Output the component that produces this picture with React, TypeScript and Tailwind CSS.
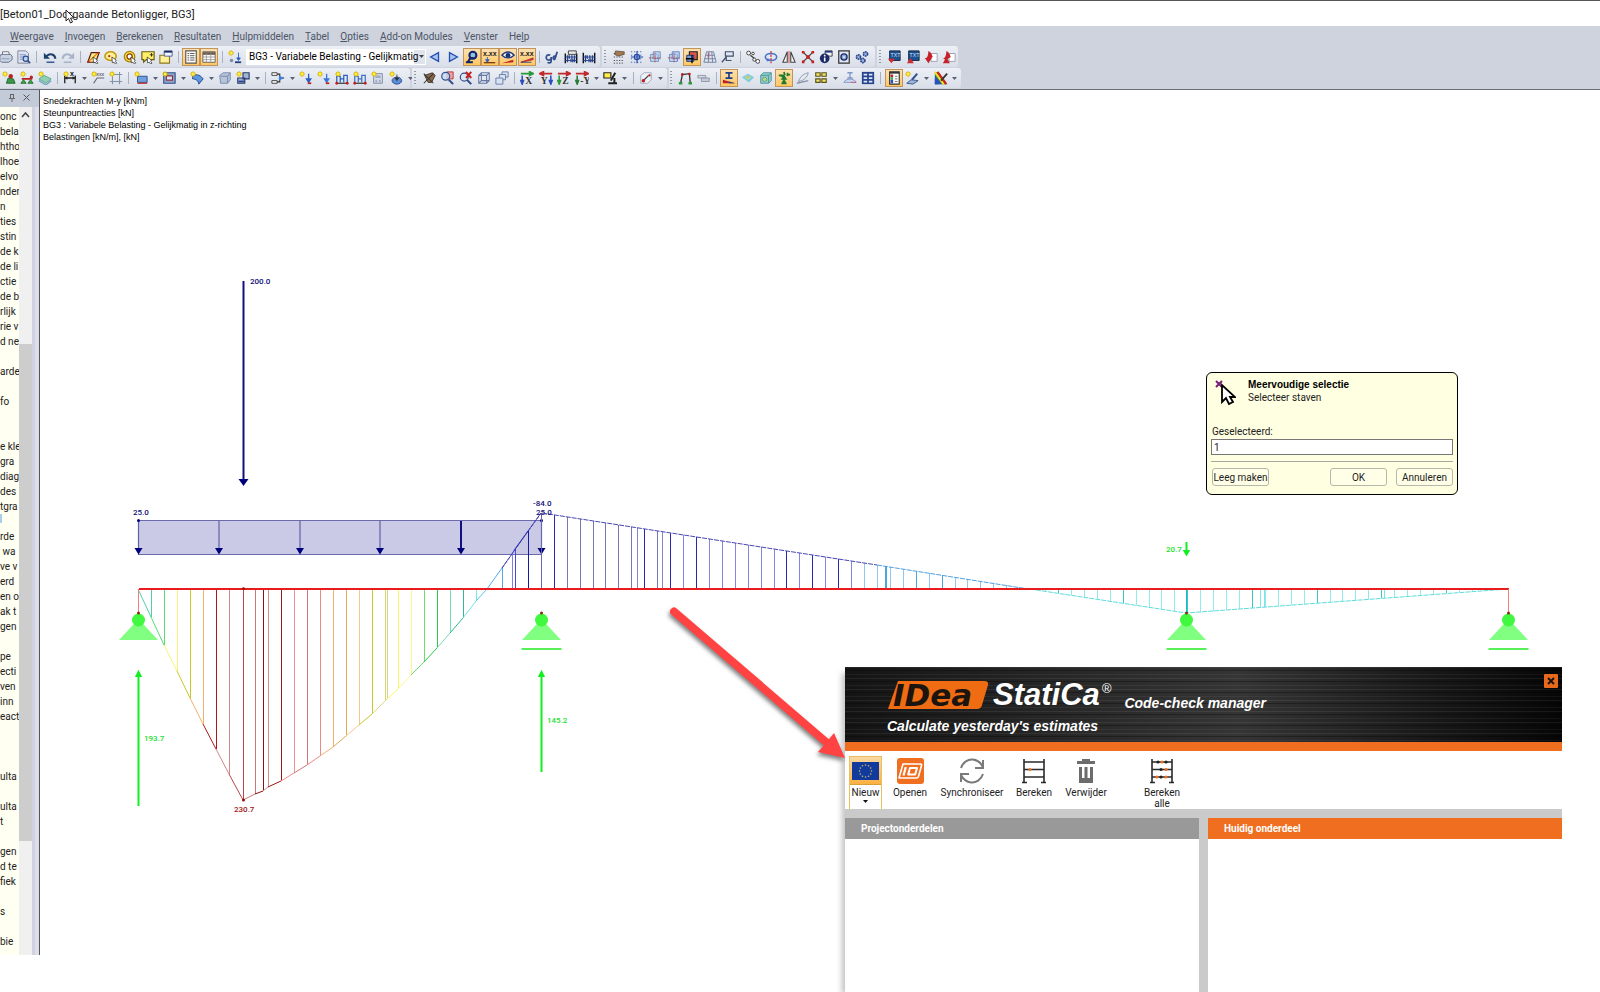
import React from "react";

/* ---------- toolbar icons (16 x 16) ---------- */

const Spark = ({ x = 3.5, y = 3.5 }: { x?: number; y?: number }) => (
  <g stroke="#d8b400" strokeWidth="1">
    <path d={`M${x - 3.5} ${y}h7M${x} ${y - 3.5}v7M${x - 2.3} ${y - 2.3}l4.6 4.6M${x + 2.3} ${y - 2.3}l-4.6 4.6`} />
    <circle cx={x} cy={y} r="1.9" fill="#fff04a" stroke="#e0c000" strokeWidth=".6" />
  </g>
);
const Hand = ({ x = 9, y = 8 }: { x?: number; y?: number }) => (
  <path d={`M${x} ${y}l5 3.5l-1 1.500l1.500 2l-1.500 1l-1.500-2l-2 .5z`} fill="#fff" stroke="#222" strokeWidth=".8" />
);
const Axis = ({ a, b, t }: { a: string; b: string; t: string }) => (
  <>
    <path d="M1 3h11M11 1l4 2l-4 2z" stroke={a} fill={a} strokeWidth="2" />
    <path d="M2.500 5v7M1 11l1.500 4l1.500-4z" stroke={b} fill={b} strokeWidth="1.800" />
    <text x="6" y="15" fontSize="11" fontFamily="Liberation Serif, serif" fontWeight="bold" fill="#333">{t}</text>
  </>
);
const Abacus = ({ y = 4 }: { y?: number }) => (
  <>
    <path d={`M1.500 ${y}v${15 - y}M14.500 ${y}v${15 - y}`} stroke="#111" strokeWidth="1.600" />
    <path d="M1 8h14M1 12h14" stroke="#223a80" />
    <path d="M4 6v4M6 6v4M9 6v4M12 6v4M4 10v4M8 10v4M10 10v4M12 10v4" stroke="#27458f" strokeWidth="1.500" />
  </>
);
const Cursor3D = ({ c }: { c: string }) => (
  <>
    <path d="M3 5h9v8H3z" fill="#c7dcf5" stroke={c} />
    <path d="M6 2h8v8H6z" fill="#aac8ee" fillOpacity=".6" stroke={c} />
    <path d="M1 9h13M8 3v12" stroke="#b04040" strokeDasharray="2 1" />
  </>
);
const Load = ({ c = "#2b5fc0" }: { c?: string }) => (
  <>
    <Spark />
    <path d="M11 3v8M8.500 9l2.500 4l2.500-4z" fill={c} stroke={c} strokeWidth="1.500" />
    <path d="M10 14h4" stroke="#c02020" strokeWidth="2" />
  </>
);
const MemberLoad = ({ c = "#2b5fc0" }: { c?: string }) => (
  <>
    <path d="M2 13V6h4v7M6 9h4v4M10 9V5h4v8" fill="none" stroke={c} strokeWidth="1.400" />
    <path d="M1 14h14" stroke="#222" strokeWidth="1.200" />
    <circle cx="2" cy="14" r="1.600" fill="#c02020" />
    <circle cx="14" cy="14" r="1.600" fill="#c02020" />
    <Spark />
  </>
);

const ICONS: Record<string, React.ReactNode> = {
  print: <><path d="M4 6V2h7l1 4" fill="#fff" stroke="#667" /><path d="M1 6l3-1h9l2 2v4l-4 3H3l-2-2z" fill="#c9d3e4" stroke="#5b6780" /><path d="M3 10h9" stroke="#8a96ad" /></>,
  preview: <><path d="M1 1h9l3 3v11H1z" fill="#dfe8f6" stroke="#778" /><path d="M3 5h7M3 7h7M3 9h4M3 11h3" stroke="#7f97c4" /><circle cx="10" cy="10" r="3" fill="#bcd5f2" stroke="#33508c" strokeWidth="1.400" /><path d="M12 12l3 3" stroke="#33508c" strokeWidth="2" /></>,
  undo: <><path d="M1 3v7h7z" fill="#1e3f6a" /><path d="M4 7c4-4 10-2 10 3" fill="none" stroke="#1e3f6a" strokeWidth="2.400" /><path d="M4 14h9" stroke="#3a5f9a" strokeWidth="1.800" /></>,
  redo: <><path d="M15 3v7H8z" fill="#a9b4c8" /><path d="M12 7c-4-4-10-2-10 3" fill="none" stroke="#a9b4c8" strokeWidth="2.400" /><path d="M3 14h9" stroke="#a9b4c8" strokeWidth="1.800" /></>,
  planeSel: <><path d="M2 14L6 3h9l-4 11z" fill="#ffe98a" stroke="#5a1c10" strokeWidth="1.400" /><path d="M3 13l10-9" stroke="#d8880f" strokeWidth="1.500" /><circle cx="3" cy="13.500" r="1.300" fill="#c02020" /><circle cx="14" cy="3.500" r="1.300" fill="#c02020" /><Hand x={8} y={8} /></>,
  ellipseSel: <><ellipse cx="7.500" cy="7" rx="6.500" ry="5" fill="#ffee9a" stroke="#c09a10" strokeWidth="1.800" /><circle cx="6" cy="7" r="1.300" fill="#c03010" /><Hand /></>,
  targetSel: <><circle cx="7.500" cy="7.500" r="6" fill="#ffe24a" stroke="#a8860b" strokeWidth="1.500" /><circle cx="7.500" cy="7.500" r="3" fill="#fff" stroke="#8a4010" strokeWidth="1.500" /><Hand /></>,
  noteSel: <><path d="M1 2h14v9H6l-3 3v-3H1z" fill="#ffee66" stroke="#6a5a10" strokeWidth="1.300" /><path d="M10 5.500h4M12 3.500v4" stroke="#222" /><Hand x={7} y={8} /></>,
  newWin: <><path d="M1 6h11v9H1z" fill="#fff099" stroke="#8a7a20" strokeWidth="1.300" /><path d="M6 1h9v6H6z" fill="#f3f6ff" stroke="#40588f" /><path d="M6 2h9" stroke="#1b2a66" strokeWidth="2" /></>,
  list: <><path d="M2 1h12v14H2z" fill="#fff" stroke="#555" strokeWidth="1.300" /><path d="M4 4h2M7 4h5M4 6.500h2M7 6.500h5M4 9h2M7 9h5M4 11.500h2M7 11.500h5" stroke="#444" /></>,
  table: <><path d="M1 2h14v12H1z" fill="#fff" stroke="#555" /><path d="M1 4h14" stroke="#6b5b4b" strokeWidth="3" /><path d="M5 4v10M10 4v10M1 8h14M1 11h14" stroke="#999" /></>,
  loadcase: <><Spark /><path d="M8 14h7" stroke="#223a80" strokeWidth="2" /><path d="M12 3v8M10 9l2 3l2-3z" stroke="#2b5fc0" fill="#2b5fc0" /><circle cx="4" cy="12" r="2" fill="#7a8dac" /></>,
  left: <path d="M12 3v10L3 8z" fill="#a8c6f4" stroke="#2350b0" strokeWidth="1.500" />,
  right: <path d="M4 3v10l9-5z" fill="#a8c6f4" stroke="#2350b0" strokeWidth="1.500" />,
  supp: <><circle cx="9" cy="6" r="4" fill="#8fc0e8" stroke="#12256a" strokeWidth="2.400" /><path d="M4 13c1-3 3-4 6-4M1 14h8M6 9L3 14" fill="none" stroke="#12256a" strokeWidth="2.200" /></>,
  x1: <><text x="0" y="6.500" fontSize="8" fontWeight="bold" fontFamily="Liberation Sans, sans-serif" fill="#222">x.xx</text><path d="M5 8v5M3 11l2 3l2-3z" stroke="#2b5fc0" fill="#2b5fc0" /><path d="M1 14.500h13" stroke="#7a3a10" strokeWidth="1.500" /></>,
  eye: <><path d="M1 6c4-5 10-5 14 0c-4 4-10 4-14 0z" fill="#fff" stroke="#223a80" strokeWidth="1.500" /><circle cx="8" cy="6" r="2.700" fill="#17306f" /><path d="M1 15l13-4v3z" fill="#c02020" /></>,
  x2: <><text x="0" y="6.500" fontSize="8" fontWeight="bold" fontFamily="Liberation Sans, sans-serif" fill="#222">x.xx</text><path d="M1 14l14-5v2z" stroke="#c03030" fill="#c03030" /><path d="M1 14h12" stroke="#1e3f8a" /></>,
  gd: <><path d="M6 6a3 3 0 1 0 1 4M7 8v5c0 2-3 2-4 1" fill="none" stroke="#33508c" strokeWidth="2" /><path d="M14 2l-3 9M13 8a2 2 0 1 0-2 3" fill="none" stroke="#33508c" strokeWidth="2" /></>,
  abacus1: <><Abacus /><path d="M5 1h9v4H5z" fill="#e9e9e9" stroke="#333" /></>,
  abacus2: <Abacus y={3} />,
  gridHand: <><path d="M2 4h12M2 8h12M2 12h12M2 15h12" stroke="#444" strokeDasharray="1.500 1.500" /><path d="M4 1l10 1v3l-7 2l-4-2z" fill="#a27a52" stroke="#4c3a2a" strokeWidth=".7" /></>,
  gridSnap: <><path d="M1 2h14M1 6h14M1 10h14M1 14h14" stroke="#3a5fb8" strokeDasharray="1.500 2" /><path d="M8 1v14M1 8h14" stroke="#2348a8" strokeWidth="1.300" /><circle cx="8" cy="8" r="3" fill="none" stroke="#2348a8" strokeWidth="1.300" /></>,
  plane1: <Cursor3D c="#6e8cb8" />,
  plane2: <Cursor3D c="#5f7fc0" />,
  planeRed: <><path d="M5 2h9v9H5z" fill="#e0574a" stroke="#222" strokeWidth="1.300" /><path d="M2 6h8v7H2z" fill="#7a9cd8" stroke="#1b2a66" /><path d="M1 10h9M8 6v9" stroke="#000" strokeWidth="1.500" /></>,
  gridPersp: <><path d="M4 2h8l3 12H1zM3 6h10M2 10h12M7 2l-1 12M10 2l1 12" fill="none" stroke="#6b7c9c" /><path d="M6 3v6" stroke="#c04040" /></>,
  section: <><path d="M5 2h9v5H5z" fill="#dfe6f2" stroke="#40506f" strokeWidth="1.300" /><path d="M1 14l5-6v4h6" fill="none" stroke="#40506f" strokeWidth="1.400" /></>,
  move: <><circle cx="3" cy="3.500" r="2.200" fill="#fff" stroke="#333" /><circle cx="8" cy="4" r="1.500" fill="#fff" stroke="#333" /><path d="M5 6l5 4" stroke="#333" strokeWidth="1.200" /><circle cx="9.500" cy="11" r="1.800" fill="#fff" stroke="#333" /><circle cx="13.500" cy="13" r="2.200" fill="#fff" stroke="#333" /></>,
  rotate: <><ellipse cx="8" cy="8" rx="6.500" ry="4" fill="none" stroke="#4a74c8" strokeWidth="1.800" /><path d="M8 1v14" stroke="#c03030" strokeWidth="1.300" strokeDasharray="3 1" /><path d="M4 9l-1 4l5-1z" fill="#4a74c8" /></>,
  mirror: <><path d="M6 2v12H1zM10 2v12h5z" fill="#f3f3f3" stroke="#444" strokeWidth="1.200" /><path d="M8 1v14" stroke="#d04040" /></>,
  scale: <><path d="M2 2l12 12M14 2L2 14" stroke="#444" strokeWidth="1.300" /><path d="M1 1h3v3H1zM12 1h3v3h-3zM1 12h3v3H1zM12 12h3v3h-3zM6 6h4v4H6z" fill="#c81e1e" /></>,
  info: <><path d="M7 1h8v6H7z" fill="#f5f5f5" stroke="#333" /><path d="M7 2h8" stroke="#223a80" strokeWidth="2" /><circle cx="6.500" cy="9.500" r="5.500" fill="#1b2a66" /><path d="M6.500 5.500v1.800M6.500 8.500v4.500" stroke="#fff" strokeWidth="1.800" /></>,
  settings: <><path d="M2 1h12v14H2z" fill="#dfe6f2" stroke="#333" strokeWidth="1.400" /><circle cx="8" cy="8" r="3.500" fill="#8fa9d8" stroke="#1b2a66" strokeWidth="1.500" /><circle cx="8" cy="8" r="1" fill="#fff" /></>,
  gears: <g fill="#9db4dc" stroke="#27458f" strokeWidth="1.800" strokeDasharray="1.800 .6"><circle cx="4" cy="8" r="2.400" /><circle cx="12" cy="4.500" r="2.400" /><circle cx="9" cy="12" r="2.400" /></g>,
  imp: <><path d="M3 1h12v11H3z" fill="#1e4f93" stroke="#123" /><text x="4" y="8.500" fontSize="6" fill="#cfe3ff" fontFamily="Liberation Sans, sans-serif">TXT</text><path d="M1 10h8l-4 5z" fill="#cf2b33" /></>,
  exp: <><path d="M3 1h12v11H3z" fill="#1e4f93" stroke="#123" /><text x="4" y="7.500" fontSize="6" fill="#cfe3ff" fontFamily="Liberation Sans, sans-serif">TXT</text><path d="M1 15h8L5 9z" fill="#cf2b33" /></>,
  pdf1: <><path d="M8 4h7v9H8z" fill="#fff" stroke="#99a" /><path d="M5 1c3 1 4 4 5 7l-5 3l-4-1c3-1 4-5 4-9z" fill="#c8202a" /><path d="M1 9h8l-4 6z" fill="#c8202a" /></>,
  pdf2: <><path d="M8 4h7v9H8z" fill="#fff" stroke="#99a" /><path d="M5 1c3 1 4 4 5 7l-5 3l-4-1c3-1 4-5 4-9z" fill="#c8202a" /><path d="M1 15h8L5 8z" fill="#c8202a" /></>,

  node: <><Spark /><path d="M5 14l2-6l6 1l2 5z" fill="#3a9a48" stroke="#1c6428" /><circle cx="10" cy="6" r="2.500" fill="#c02020" /></>,
  member: <><path d="M2 9h12" stroke="#b52020" strokeWidth="2" /><circle cx="13" cy="7" r="1.800" fill="#c02020" /><path d="M1 14l3-4l3 4zM9 14l3-4l3 4z" fill="#3fae4a" stroke="#1c6428" /><Spark /></>,
  slab: <><path d="M1 9l6-4l8 4l-6 5z" fill="#8fd0b4" stroke="#58a58a" /><path d="M1 11l8 5l6-5" fill="none" stroke="#74a3c8" strokeWidth="1.500" /><Spark /></>,
  dim: <><path d="M2 8h12M2 5v9M14 5v9" stroke="#222" strokeWidth="1.500" /><path d="M2 8l3-2v4zM14 8l-3-2v4z" fill="#222" /><text x="8" y="5.500" fontSize="8" fontWeight="bold" fontFamily="Liberation Sans, sans-serif" fill="#111">x</text><Spark /></>,
  dim2: <><Spark /><path d="M3 14l4-6h8" fill="none" stroke="#667" strokeWidth="1.300" /><text x="6" y="6" fontSize="6" fontFamily="Liberation Sans, sans-serif" fill="#333">xxx</text></>,
  frame: <><path d="M4 1v14M12 1v14M1 4h14M1 12h14" stroke="#8492ab" strokeWidth="1.200" /><Spark /></>,
  block: <><path d="M4 6h11v7H4z" fill="#6f9fdc" stroke="#27458f" /><path d="M4 14h11" stroke="#c03030" strokeWidth="1.500" /><Spark /></>,
  opening: <><path d="M2 2h13v12H2z" fill="#8fa6cc" stroke="#33508c" strokeWidth="1.300" /><path d="M5 5.500h7v5H5z" fill="#dfe6f4" stroke="#8a3040" strokeWidth="1.300" /><Spark /></>,
  curve: <><path d="M3 6c5-4 10 0 12 3l-5 6c0-4-4-6-7-6z" fill="#5d97e0" stroke="#1e3f8a" /><Spark /></>,
  solid: <><path d="M2 5l4-3h8v8l-3 4H3z" fill="#b7c5dc" stroke="#7384a4" /><path d="M3 6h8v8M11 6l3-4" fill="none" stroke="#7384a4" /></>,
  assembly: <><path d="M2 8h8v6H2zM8 2h7v7H8z" fill="#9fb4d6" stroke="#2a3c66" strokeWidth="1.300" /><path d="M3 12h7" stroke="#27458f" strokeWidth="2" /><Spark /></>,
  connect: <><path d="M1 2h6v3H1zM1 11h6v3H1z" fill="#fff" stroke="#333" /><path d="M7 3.500h3v9H7M10 8h5" fill="none" stroke="#333" strokeWidth="1.300" /><path d="M9 5l6 3l-6 3z" fill="#3d7fd8" /></>,
  load1: <Load />,
  load2: <Load c="#3a78d8" />,
  ml1: <MemberLoad />,
  ml2: <MemberLoad c="#3f6fc8" />,
  calc: <><path d="M3 3h10v11H3z" fill="#d5dbe6" stroke="#7b88a0" /><path d="M5 5h6v3H5zM5 10h2v3H5zM9 10h2v3H9z" fill="#9fadc6" /><Spark /></>,
  globe: <><ellipse cx="9" cy="11" rx="5.500" ry="4" fill="#5a8fd8" stroke="#27458f" /><path d="M9 4v5M7 8l2 3l2-3z" stroke="#333" fill="#333" /><Spark /></>,
  hand: <><path d="M3 5l9-3l3 3l-4 8H7z" fill="#8a6a4a" stroke="#3d2f22" /><path d="M2 3l11 11M2 14L13 3" stroke="#333" strokeWidth="1.200" /></>,
  zoomwin: <><path d="M8 1h7v8H8z" fill="#f2a3a3" stroke="#b03030" /><circle cx="6.500" cy="6" r="4.500" fill="#c8dcf5" fillOpacity=".8" stroke="#33508c" strokeWidth="1.400" /><path d="M10 10l5 5" stroke="#33508c" strokeWidth="2.400" /></>,
  zoomx: <><circle cx="6" cy="7" r="4.500" fill="#dbe8f8" stroke="#33508c" strokeWidth="1.400" /><path d="M9 10l5 5" stroke="#33508c" strokeWidth="2.400" /><path d="M8 1l6 7M14 1L8 8" stroke="#c81e1e" strokeWidth="2.200" /></>,
  cube: <path d="M2 5l3-3h9v9l-3 3H2zM2 5h9v9M11 5l3-3M5 2v9h9M5 11l-3 3" fill="none" stroke="#6377a3" strokeWidth="1.200" />,
  copies: <g fill="#d9e2f2" stroke="#6377a3"><path d="M8 1h7v6H8z" /><path d="M5 4h7v6H5z" /><path d="M1 8h8v7H1z" /></g>,
  ax: <Axis a="#2a9a3a" b="#2b4fc0" t="X" />,
  ay: <><path d="M4 3h11M5 1L1 3l4 2z" stroke="#c02a2a" fill="#c02a2a" strokeWidth="2" /><path d="M13.500 5v7M12 11l1.500 4l1.500-4z" stroke="#2b4fc0" fill="#2b4fc0" strokeWidth="1.800" /><text x="2" y="15" fontSize="11" fontFamily="Liberation Serif, serif" fontWeight="bold" fill="#333">Y</text></>,
  az: <Axis a="#c02a2a" b="#2a9a3a" t="Z" />,
  amy: <Axis a="#c02a2a" b="#2a7a3a" t="-Y" />,
  micro: <><path d="M1 2h8v6H1z" fill="#fff04a" stroke="#222" strokeWidth="1.300" /><path d="M14 2l-5 9M6 14h10M13 8v5" stroke="#222" strokeWidth="2.300" /></>,
  iso: <><path d="M2 5l4-3h8v8l-4 4H2z" fill="#eef1f6" stroke="#9aa6bc" /><path d="M4 12l7-7" stroke="#444" strokeWidth="1.500" /><circle cx="5" cy="11" r="2" fill="#c02020" /><circle cx="12" cy="5" r="1.300" fill="#c02020" /></>,
  portal: <><path d="M3 14l2-10l8-1l1 11" fill="none" stroke="#333" strokeWidth="1.500" /><circle cx="5" cy="4" r="1.600" fill="#c02020" /><circle cx="13" cy="3.500" r="1.600" fill="#c02020" /><path d="M1 14h4M12 14h4" stroke="#2a9a3a" strokeWidth="2.600" /></>,
  cyl: <><path d="M1 5h9v3H1z" fill="#d4d9e2" stroke="#8a94a8" /><path d="M5 8h9v4H5z" fill="#c4cad6" stroke="#8a94a8" /></>,
  stress: <><path d="M4 2h8M8 2v6M4 8h8" stroke="#1e3f8a" strokeWidth="2" /><path d="M1 14h14L1 10z" fill="#c02020" /><path d="M8 12l7 2H8z" fill="#1e3f8a" /></>,
  surface: <><path d="M1 7l7-4l7 4l-6 6z" fill="#7fcbe0" /><path d="M4 7l4-2l4 2l-4 3z" fill="#b4e48a" /><path d="M6 7l2-1l2 1l-2 1z" fill="#f0a06a" /></>,
  ccube: <><path d="M2 5l3-3h9v9l-3 3H2z" fill="#8fd0c8" stroke="#4a8f98" /><path d="M2 5h9v9M11 5l3-3" fill="none" stroke="#4a8f98" /><circle cx="6.500" cy="9.500" r="2.500" fill="#b8dc70" stroke="#6a9a9a" /></>,
  greens: <path d="M8 14V8M6 9l2-3l2 3zM2 5h5v3M12 4h3M12 2v4M8 1l1 4M5 14h6M6 12h4" stroke="#1f7a2c" fill="#2fa33e" strokeWidth="2" />,
  feather: <><path d="M3 12c2-7 7-9 11-10c-1 5-5 9-11 10z" fill="#e5eaf2" stroke="#8a94a8" /><path d="M1 14l13-3" stroke="#8a94a8" strokeWidth="1.500" /></>,
  blocks: <g fill="#f0e56a" stroke="#5a5018" strokeWidth="1.300"><path d="M2 2h5v4H2zM9 2h5v4H9zM2 9h5v4H2zM9 9h5v4H9z" /></g>,
  arc: <><path d="M5 2h6M8 2v6M5 8h6" stroke="#8095c8" strokeWidth="1.500" /><path d="M1 13c2-5 12-5 14 0z" fill="#cdd8f0" stroke="#8095c8" /><path d="M9 13h6" stroke="#d05a6a" /></>,
  bgrid: <><path d="M1 1h14v14H1z" fill="#27458f" /><path d="M3 3h4v2H3zM9 3h4v2H9zM3 7h4v2H3zM9 7h4v2H9zM3 11h4v2H3zM9 11h4v2H9z" fill="#dfe8fa" /></>,
  panel: <><path d="M3 1h11v14H3z" fill="#fff" stroke="#333" strokeWidth="1.300" /><path d="M3 2h11" stroke="#333" strokeWidth="2" /><path d="M4 4h3v3H4z" fill="#c02020" /><path d="M4 7h3v3H4z" fill="#3fae4a" /><path d="M4 10h3v4H4z" fill="#2b4fc0" /><path d="M9 6h3M9 9h3M9 12h3" stroke="#666" /></>,
  wand: <><path d="M8 10l6-7" stroke="#33508c" strokeWidth="2.200" /><path d="M2 14l5-4l8 1l-6 4z" fill="#9fb4d6" stroke="#33508c" /><Spark /></>,
  rainbow: <><path d="M1 1h4l10 14H1z" fill="#2a9a3a" /><path d="M1 5l8 10H1z" fill="#2b4fc0" /><path d="M1 9l4 6H1z" fill="#2b4fc0" /><path d="M1 1l10 14" stroke="#f0e020" strokeWidth="2.500" /><path d="M4 1l10 14" stroke="#d02020" strokeWidth="2.500" /><path d="M15 3L8 11" stroke="#333" strokeWidth="2" /></>,
};

/* "|" is a divider, "v" a menu caret, "*" in front of a name marks a pressed tool */
const Tools = ({ items }: { items: string }) => (
  <>
    {items.split(" ").map((it, i) => {
      if (it === "|") return <span key={i} className="mx-[3px] h-3 w-px shrink-0 bg-[#a9b0bf]" />;
      if (it === "v")
        return (
          <button key={i} type="button" aria-label="Meer" className="flex h-[18px] w-[10px] shrink-0 items-center justify-center">
            <svg width="5" height="3" viewBox="0 0 5 3"><path d="M0 0h5L2.500 3z" fill="#5a6070" /></svg>
          </button>
        );
      const on = it.startsWith("*");
      const name = on ? it.slice(1) : it;
      return (
        <button
          key={i}
          type="button"
          aria-label={name}
          className={
            on
              ? "flex size-[18px] shrink-0 items-center justify-center border border-[#c2935a] bg-linear-to-b from-[#fde0b0] to-[#ffc860]"
              : "flex size-[18px] shrink-0 items-center justify-center"
          }
        >
          <svg width="14" height="14" viewBox="0 0 16 16" fill="none" className="shrink-0">{ICONS[name]}</svg>
        </button>
      );
    })}
  </>
);

const Grip = () => (
  <span className="mr-1 h-[14px] w-[2px] shrink-0 bg-[repeating-linear-gradient(#9299a8_0_1px,transparent_1px_3px)]" />
);

const band = "flex items-center justify-between rounded-r-[3px] bg-linear-to-b from-[#edf0f6] to-[#d9dee8]";

const MENU: [string, string][] = [
  ["W", "eergave"], ["I", "nvoegen"], ["B", "erekenen"], ["R", "esultaten"], ["H", "ulpmiddelen"],
  ["T", "abel"], ["O", "pties"], ["A", "dd-on Modules"], ["V", "enster"],
];

const TREE = [
  "onc", "bela", "htho", "lhoe", "elvo", "nder", "n", "ties", "stin", "de k", "de li", "ctie", "de b", "rlijk", "rie v", "d ne",
  "", "arde", "", "fo", "", "", "e kle", "gra", "diag", "des", "tgra", "", "rde", " wa", "ve v", "erd", "en o", "ak t", "gen",
  "", "pe", "ecti", "ven", "inn", "eact", "", "", "", "ulta", "", "ulta", "t", "", "gen", "d te", "fiek", "", "s", "", "bie",
];

/* ---------- moment diagram ---------- */

type Ord = [number, number, string];
const FIELD: Ord[] = [
  [138, 589, "#5ee0e0"], [151, 617, "#4fd0a8"], [164, 645, "#58dc78"], [177, 671, "#f4f47a"], [190, 698, "#c8c828"],
  [203, 724, "#f0b070"], [216, 749, "#b01818"], [229, 774, "#d08888"], [243, 800, "#b84848"], [255, 794, "#c87878"],
  [263, 791, "#8c1010"], [268, 787, "#d09090"], [281, 781, "#981818"], [294, 773, "#f09090"], [307, 765, "#d07878"],
  [320, 756, "#f08888"], [333, 747, "#f0b070"], [346, 736, "#e0a858"], [359, 725, "#f4c890"], [372, 714, "#c8c828"],
  [385, 701, "#d8d880"], [387, 699, "#d8d880"], [398, 689, "#f8f860"], [411, 675, "#f8f890"], [424, 662, "#70dc70"],
  [437, 648, "#30c848"], [450, 633, "#78dcb0"], [463, 618, "#30b890"], [476, 601, "#70e8e8"], [487, 589, "#50c8e8"],
  [502, 568, "#58a8f0"], [512, 554, "#8080e0"], [515, 549, "#4848d8"], [528, 531, "#1818a0"], [541, 513, "#6868b0"],
];

const SLOPE: Ord[] = [];
const slopeY = (x: number) => 513 + (x - 542) * 0.1553;
const DARK = [1, 8, 10, 12, 19, 21, 23];
for (let k = 1; k < 38; k++) {
  const x = Math.round(540.8 + 12.93 * k);
  if (x > 1022) break;
  const c = k >= 25 ? (k === 29 || k === 31 ? "#48a8d8" : "#90c8f4") : DARK.includes(k) ? "#2828b0" : k < 11 ? "#7878b4" : "#8484e4";
  SLOPE.push([x, slopeY(x), c]);
}
for (const x of [637, 662]) SLOPE.push([x, slopeY(x), "#8888c0"]);
SLOPE.push([885, slopeY(885), "#48a8d8"], [886, slopeY(886), "#48a8d8"]);

const SAG: Ord[] = [];
for (let k = 39; k < 74; k++) {
  const x = Math.round(540.8 + 12.93 * k);
  const y = x < 1186 ? slopeY(x) : 613 - (x - 1186) * 0.0758;
  SAG.push([x, y, k % 5 === 0 ? "#38c8c8" : "#90ecec"]);
}
for (const x of [1260, 1264, 1384]) SAG.push([x, 613 - (x - 1186) * 0.0758, "#80e4e4"]);

const Ordinates = ({ data }: { data: Ord[] }) => (
  <g shapeRendering="crispEdges">
    {data.map(([x, y, c], i) => <line key={i} x1={x + 0.5} x2={x + 0.5} y1="589" y2={y} stroke={c} />)}
  </g>
);

const Support = ({ x, roller, stem }: { x: number; roller?: boolean; stem?: boolean }) => (
  <g>
    {stem && <line x1={x} x2={x} y1="589" y2="613" stroke="#f08080" />}
    <path d={`M${x} 619L${x + 19.500} 640H${x - 19.500}Z`} fill="#80ff80" />
    <circle cx={x} cy="620" r="6.500" fill="#40f840" />
    <circle cx={x} cy="613" r="1.500" fill="#8a2a10" />
    {roller && <path d={`M${x - 20} 649h40`} stroke="#58f058" strokeWidth="2" />}
  </g>
);

const Reaction = ({ x, y1, y2 }: { x: number; y1: number; y2: number }) => (
  <path d={`M${x} ${y2}V${y1 + 4}M${x - 2} ${y1 + 5}L${x} ${y1 + 1}l2 4z`} stroke="#10f020" fill="#10f020" strokeWidth="2" />
);

const Diagram = () => (
  <svg width="1560" height="864" viewBox="40 90 1560 864" className="absolute left-0 top-0 max-w-none" fontFamily="Roboto, sans-serif" fontSize="8" fontWeight="500">
    <rect x="138.500" y="520.500" width="403" height="34" fill="#cacae6" stroke="#6c6cac" />
    {[138.5, 219, 300, 380, 461, 541.5].map((x) => (
      <g key={x}>
        <path d={`M${x} 521v30`} stroke={x === 461 ? "#101080" : "#6060a0"} strokeWidth={x === 461 ? 2 : 1.200} />
        <path d={`M${x - 4} 548h8l-4 6.500z`} fill="#00007c" />
      </g>
    ))}
    <circle cx="138.500" cy="520.500" r="1.500" fill="#00007c" />
    <circle cx="541.500" cy="520.500" r="1.500" fill="#00007c" />
    <path d="M243.500 281v200" stroke="#101080" strokeWidth="2" />
    <path d="M238.500 479h10l-5 7z" fill="#00007c" />
    <Ordinates data={FIELD} />
    <Ordinates data={SLOPE} />
    <Ordinates data={SAG} />
    {FIELD.slice(1).map(([x, y, c], i) => (
      <line key={i} x1={FIELD[i][0]} y1={FIELD[i][1]} x2={x} y2={y} stroke={c} />
    ))}
    <path d="M502 568L541 513" stroke="#3838b8" strokeDasharray="4 1" />
    <path d="M542 513L877 565" stroke="#4848b0" strokeDasharray="5 1" />
    <path d="M877 565L1028 589" stroke="#50a0e0" strokeDasharray="5 1" />
    <path d="M1030 589L1186 613L1508 589" fill="none" stroke="#60dcdc" strokeDasharray="5 1" />
    <path d="M1186.500 589v24" stroke="#20b8c0" />
    <path d="M139 589H1509" stroke="#e81c1c" strokeWidth="2" />
    <circle cx="243.500" cy="588.500" r="1.300" fill="#901010" />
    <circle cx="243.500" cy="800" r="1.500" fill="#901010" />
    <Support x={138.5} stem />
    <Support x={541.5} roller />
    <Support x={1186.5} roller />
    <Support x={1508.5} roller stem />
    <Reaction x={138.5} y1={671} y2={806} />
    <Reaction x={541.5} y1={671} y2={772} />
    <path d="M1186.500 542v8M1184.500 551h4l-2 3.500z" stroke="#10f020" fill="#10f020" strokeWidth="2" />
    <g fill="#101078">
      <text x="250" y="284">200.0</text>
      <text x="133" y="515">25.0</text>
      <text x="533" y="506">-84.0</text>
      <text x="536" y="515">25.0</text>
    </g>
    <text x="234" y="812" fill="#a01818">230.7</text>
    <g fill="#20e030">
      <text x="144" y="741">193.7</text>
      <text x="547" y="723">145.2</text>
      <text x="1166" y="552">20.7</text>
    </g>
  </svg>
);

/* ---------- code-check manager ---------- */

const SyncIcon = () => (
  <svg width="26" height="26" viewBox="0 0 26 26" fill="none" stroke="#7a7a7a" strokeWidth="2">
    <path d="M2 10C4 4 9 1 14 1.500C18 2 22 5 24 9M24 2v8h-8" />
    <path d="M24 16C22 22 17 25 12 24.500C8 24 4 21 2 17M2 24v-8h8" />
  </svg>
);
const RackIcon = ({ full }: { full?: boolean }) => (
  <svg width="26" height="26" viewBox="0 0 26 26" fill="none" stroke="#2a2a2a" strokeWidth="1.600">
    <path d="M3 1v24M23 1v24M1 24.500h5M20 24.500h5M3 4h20M3 11.500h20M3 19h20" />
    {full ? (
      <g stroke="none">
        <g fill="#222"><circle cx="9" cy="4" r="1.600" /><circle cx="17" cy="4" r="1.600" /><circle cx="12" cy="11.500" r="1.600" /><circle cx="12" cy="19" r="1.600" /></g>
        <g fill="#f06e20"><circle cx="13" cy="4" r="1.600" /><circle cx="17" cy="11.500" r="1.600" /><circle cx="8" cy="19" r="1.600" /><circle cx="17" cy="19" r="1.600" /></g>
      </g>
    ) : (
      <circle cx="9" cy="11.500" r="1.500" fill="#f06e20" stroke="none" />
    )}
  </svg>
);
const BinIcon = () => (
  <svg width="20" height="26" viewBox="0 0 20 26" fill="#6c6c6c">
    <path d="M6 1h8v2h5v3H1V3h5z" />
    <path d="M3 9h3v11h2.500V9h3v11H14V9h3v16H3z" />
  </svg>
);
const OpenIcon = () => (
  <svg width="27" height="26" viewBox="0 0 27 26">
    <rect width="27" height="26" rx="3" fill="#f06e20" />
    <path d="M6 6h17.500q1.500 0 1 1.500l-3 11q-.5 1.500-2 1.500H2z" fill="none" stroke="#fff" strokeWidth="1.600" strokeLinejoin="round" />
    <path d="M8.800 9l-2.300 8.500" fill="none" stroke="#fff" strokeWidth="2.200" />
    <path d="M13 10h7l-1.800 6.500h-7z" fill="none" stroke="#fff" strokeWidth="2" strokeLinejoin="round" />
  </svg>
);
const FlagIcon = () => (
  <svg width="27" height="18" viewBox="0 0 27 18">
    <rect width="27" height="18" fill="#123a9c" />
    {Array.from({ length: 12 }, (_, i) => (
      <circle key={i} cx={13.5 + 6 * Math.cos((i * Math.PI) / 6)} cy={9 + 6 * Math.sin((i * Math.PI) / 6)} r=".8" fill="#c8bc60" />
    ))}
  </svg>
);

const Action = ({ icon, label, cls }: { icon: React.ReactNode; label: string; cls: string }) => (
  <button type="button" className={"flex flex-col items-center text-center " + cls}>
    <span className="mt-px flex h-[28px] items-center justify-center">{icon}</span>
    <span className="mt-[2px] leading-[11px]">{label}</span>
  </button>
);

const Manager = () => (
  <section className="absolute bottom-0 left-[845px] right-[38px] top-[667px] flex flex-col bg-white text-[10px] text-[#222] shadow-[-5px_4px_6px_-2px_rgba(0,0,0,0.25)]" aria-label="Code-check manager">
    <header className="flex h-[75px] shrink-0 items-start bg-[repeating-linear-gradient(180deg,rgba(255,255,255,0.07)_0_1px,transparent_1px_3px,rgba(0,0,0,0.3)_3px_4px,transparent_4px_7px,rgba(255,255,255,0.05)_7px_8px,transparent_8px_11px),linear-gradient(90deg,#141414,#242424_25%,#353535_55%,#1a1a1a_80%,#060606)] pr-1 font-['Liberation_Sans',sans-serif] font-bold italic text-white">
      <div className="ml-[42px] mt-[13px]">
        <div className="flex h-[30px] items-center">
          <svg width="104" height="30" viewBox="0 0 104 30" aria-label="IDEA">
            <path d="M11 1h86q5 0 4 4l-6 20q-1 4-5 4H1z" fill="#ef6c12" />
            <text x="6" y="26" fontSize="31" fontWeight="bold" fontStyle="italic" fontFamily="DejaVu Sans, sans-serif" fill="#1c140e">IDea</text>
          </svg>
          <span className="ml-[2px] text-[31px] leading-[30px]">StatiCa</span>
          <sup className="ml-[2px] text-[13px] font-normal">®</sup>
        </div>
        <p className="mt-[8px] text-[14px] leading-[16px]">Calculate yesterday's estimates</p>
      </div>
      <p className="ml-[13px] mt-[28px] text-[14px] leading-[16px]">Code-check manager</p>
      <button type="button" aria-label="Sluiten" className="ml-auto mt-[7px] flex size-[14px] items-center justify-center rounded-[1px] bg-[#e8681c]">
        <svg width="8" height="8" viewBox="0 0 8 8"><path d="M1 1l6 6M7 1L1 7" stroke="#111" strokeWidth="1.800" /></svg>
      </button>
    </header>
    <div className="h-[9px] shrink-0 bg-[#f06e20]" />
    <div className="flex h-[58px] shrink-0 items-start pl-1 pt-[5px]">
      <button type="button" className="flex h-[53px] w-[33px] flex-col items-center border border-b-0 border-[#e8c060]">
        <span className="flex h-[28px] w-full items-center justify-center border-b border-[#d8a030] bg-linear-to-b from-[#f8d8a0] to-[#fcb040]">
          <FlagIcon />
        </span>
        <span className="mt-[2px] leading-[11px]">Nieuw</span>
        <svg width="5" height="3" viewBox="0 0 5 3" className="mt-[2px]"><path d="M0 0h5L2.500 3z" fill="#111" /></svg>
      </button>
      <Action icon={<OpenIcon />} label="Openen" cls="ml-[6px] w-[44px]" />
      <Action icon={<SyncIcon />} label="Synchroniseer" cls="ml-[6px] w-[68px]" />
      <Action icon={<RackIcon />} label="Bereken" cls="ml-[6px] w-[44px]" />
      <Action icon={<BinIcon />} label="Verwijder" cls="ml-[5px] w-[50px]" />
      <Action icon={<RackIcon full />} label="Bereken alle" cls="ml-[29px] w-[44px]" />
    </div>
    <div className="flex min-h-0 flex-1 gap-[9px] bg-[#cacaca] pt-[9px] font-bold text-white">
      <div className="flex flex-1 flex-col bg-white">
        <h2 className="bg-[#999] pl-4 leading-[21px]">Projectonderdelen</h2>
      </div>
      <div className="flex flex-1 flex-col bg-white">
        <h2 className="bg-[#f06e20] pl-4 leading-[21px]">Huidig onderdeel</h2>
      </div>
    </div>
  </section>
);

const dlgButton = "h-[18px] rounded-[3px] border border-[#b8b8a8] bg-[#ffffe8]";

const SelectionDialog = () => (
  <form className="absolute left-[1206px] top-[372px] w-[252px] rounded-[6px] border border-black bg-[#ffffe1] px-[4px] pb-[8px] pt-[5px] text-[10px] text-[#222]">
    <div className="flex">
      <svg width="22" height="28" viewBox="0 0 22 28" className="ml-[3px]">
        <path d="M2 3l6 6M8 3L2 9" stroke="#7a1a7a" strokeWidth="2" />
        <path d="M8 7v17l4-4l3 6l4-2l-3-5h5z" fill="#fff" stroke="#000" strokeWidth="1.800" />
      </svg>
      <div className="ml-[12px]">
        <h2 className="font-['Liberation_Sans',sans-serif] font-bold leading-[13px] text-black">Meervoudige selectie</h2>
        <p className="leading-[13px]">Selecteer staven</p>
      </div>
    </div>
    <label htmlFor="sel" className="mt-[19px] block pl-px leading-[13px]">Geselecteerd:</label>
    <input id="sel" defaultValue="1" className="mt-[1px] block h-[16px] w-full border border-[#777] bg-white px-[2px] outline-none" />
    <hr className="mt-[6px] border-t-[1px] border-[#a8a8a0]" />
    <div className="mt-[6px] flex pl-px">
      <button type="button" className={dlgButton + " w-[57px]"}>Leeg maken</button>
      <button type="submit" className={dlgButton + " ml-auto w-[57px]"}>OK</button>
      <button type="button" className={dlgButton + " ml-[9px] w-[57px]"}>Annuleren</button>
    </div>
  </form>
);

export default function App() {
  return (
    <div className="relative min-h-screen overflow-hidden bg-white font-['Roboto',sans-serif] text-[10px] text-[#222]">
      <header>
        <h1 className="flex h-[26px] items-center border-t border-[#555] pt-[3px] text-[11px]">[Beton01_Doorgaande Betonligger, BG3]</h1>
        <nav className="flex h-[20px] items-center gap-[11px] bg-[#ced3de] pl-[10px] text-[#4d5566]">
          {MENU.map(([u, rest]) => (
            <a key={rest} href="#"><u>{u}</u>{rest}</a>
          ))}
          <a href="#">He<u>l</u>p</a>
        </nav>
        <div className="border-b border-[#6a6e78] bg-[#ced3de] pb-[1px]">
          <div className="flex h-[21px] gap-[2px]">
            <div className={band + " w-[600px] pr-[2px]"}>
              <div className="-ml-[3px] flex w-[247px] shrink-0 items-center justify-between">
                <Tools items="print preview | undo redo | planeSel ellipseSel targetSel noteSel newWin | *list *table | loadcase" />
              </div>
              <select aria-label="Belastingsgeval" className="h-[16px] w-[180px] shrink-0 appearance-none bg-white bg-[linear-gradient(#dfe3ec,#dfe3ec)] bg-[length:11px_14px] bg-[position:right_1px_center] bg-no-repeat pl-[3px] text-[10px] text-black">
                <option>BG3 - Variabele Belasting - Gelijkmatig</option>
              </select>
              <svg width="5" height="3" viewBox="0 0 5 3" className="pointer-events-none -ml-[9px] shrink-0"><path d="M0 0h5L2.500 3z" fill="#444" /></svg>
              <div className="flex w-[172px] shrink-0 items-center justify-between">
                <Tools items="left right *supp *x1 *eye *x2 | gd abacus1 abacus2" />
              </div>
            </div>
            <div className={band + " w-[273px] pl-[2px] pr-[4px]"}>
              <Grip />
              <Tools items="gridHand gridSnap plane1 plane2 *planeRed gridPersp section | move rotate mirror scale info settings gears" />
            </div>
            <div className={band + " w-[81px] pl-[2px]"}>
              <Grip />
              <Tools items="imp exp pdf1 pdf2" />
            </div>
          </div>
          <div className="mt-[1px] flex h-[20px] gap-[2px]">
            <div className={band + " w-[410px]"}>
              <Tools items="node member slab | dim v dim2 frame | block v opening v curve v solid assembly v | connect v load1 load2 ml1 ml2 calc globe v" />
            </div>
            <div className={band + " w-[255px] px-[2px]"}>
              <Grip />
              <Tools items="hand zoomwin zoomx cube copies | ax ay az amy v micro v | iso v" />
            </div>
            <div className={band + " w-[292px] px-[1px]"}>
              <Grip />
              <Tools items="portal cyl | *stress surface ccube *greens feather blocks v arc bgrid | *panel wand v rainbow v" />
            </div>
          </div>
        </div>
      </header>

      <div className="flex">
        <aside className="flex w-[40px] shrink-0 flex-col border-r border-[#555] bg-[#cfd2e0]">
          <div className="flex h-[17px] items-start justify-end gap-[8px] bg-[#c3cad8] pr-[9px] pt-[4px] text-[#555]">
            <button type="button" aria-label="Vastzetten" className="flex">
              <svg width="6" height="8" viewBox="0 0 6 8" fill="none" stroke="#666"><path d="M1.500 0v4M4.500 0v4M1.500 .5h3M0 4.500h6M3 5v3" /></svg>
            </button>
            <button type="button" aria-label="Sluiten" className="flex">
              <svg width="7" height="7" viewBox="0 0 7 7" stroke="#555"><path d="M.5 .5l6 6M6.500 .5l-6 6" /></svg>
            </button>
          </div>
          <div className="flex">
            <ul className="w-[19px] bg-[#fffff2] pb-[6px] pt-[2px]">
              {TREE.map((t, i) => (
                <li key={i} className="h-[15px] whitespace-pre leading-[15px]">
                  {i === 27 ? <span className="block h-[9px] w-[2px] bg-[#a8d0ea]" /> : t}
                </li>
              ))}
            </ul>
            <div className="flex w-[13px] flex-col bg-[#f0f0f0]">
              <svg width="13" height="16" viewBox="0 0 13 16" fill="none" stroke="#444" strokeWidth="1.500"><path d="M3 10l3.500-4l3.500 4" /></svg>
              <div className="mt-[221px] h-[497px] bg-[#cdcdcd]" />
            </div>
            <div className="ml-auto w-[4px] bg-[#dcdfe9]" />
          </div>
        </aside>
        <main className="relative min-w-0 flex-1">
          <Diagram />
          <div className="relative pl-[3px] pt-[5px] font-['Liberation_Sans',sans-serif] text-[9px] leading-[12px] text-black">
            <p>Snedekrachten M-y [kNm]</p>
            <p>Steunpuntreacties [kN]</p>
            <p>BG3 : Variabele Belasting - Gelijkmatig in z-richting</p>
            <p>Belastingen [kN/m], [kN]</p>
          </div>
        </main>
      </div>

      <SelectionDialog />
      <Manager />

      <svg width="200" height="180" viewBox="660 600 200 180" className="pointer-events-none absolute left-[660px] top-[600px] drop-shadow-[-1px_3px_2px_rgba(0,0,0,0.5)]">
        <path d="M674 611.500L826 742" stroke="#ff4242" strokeWidth="8" strokeLinecap="round" />
        <path d="M834 733L845 758L818 752L826 743z" fill="#ff4242" />
      </svg>
      <svg width="10" height="15" viewBox="0 0 10 15" className="pointer-events-none absolute left-[65px] top-[9px]">
        <path d="M1 1v11l2.500-2.500l2 4.500l2-1l-2-4h3.500z" fill="#fff" stroke="#222" />
      </svg>
    </div>
  );
}
